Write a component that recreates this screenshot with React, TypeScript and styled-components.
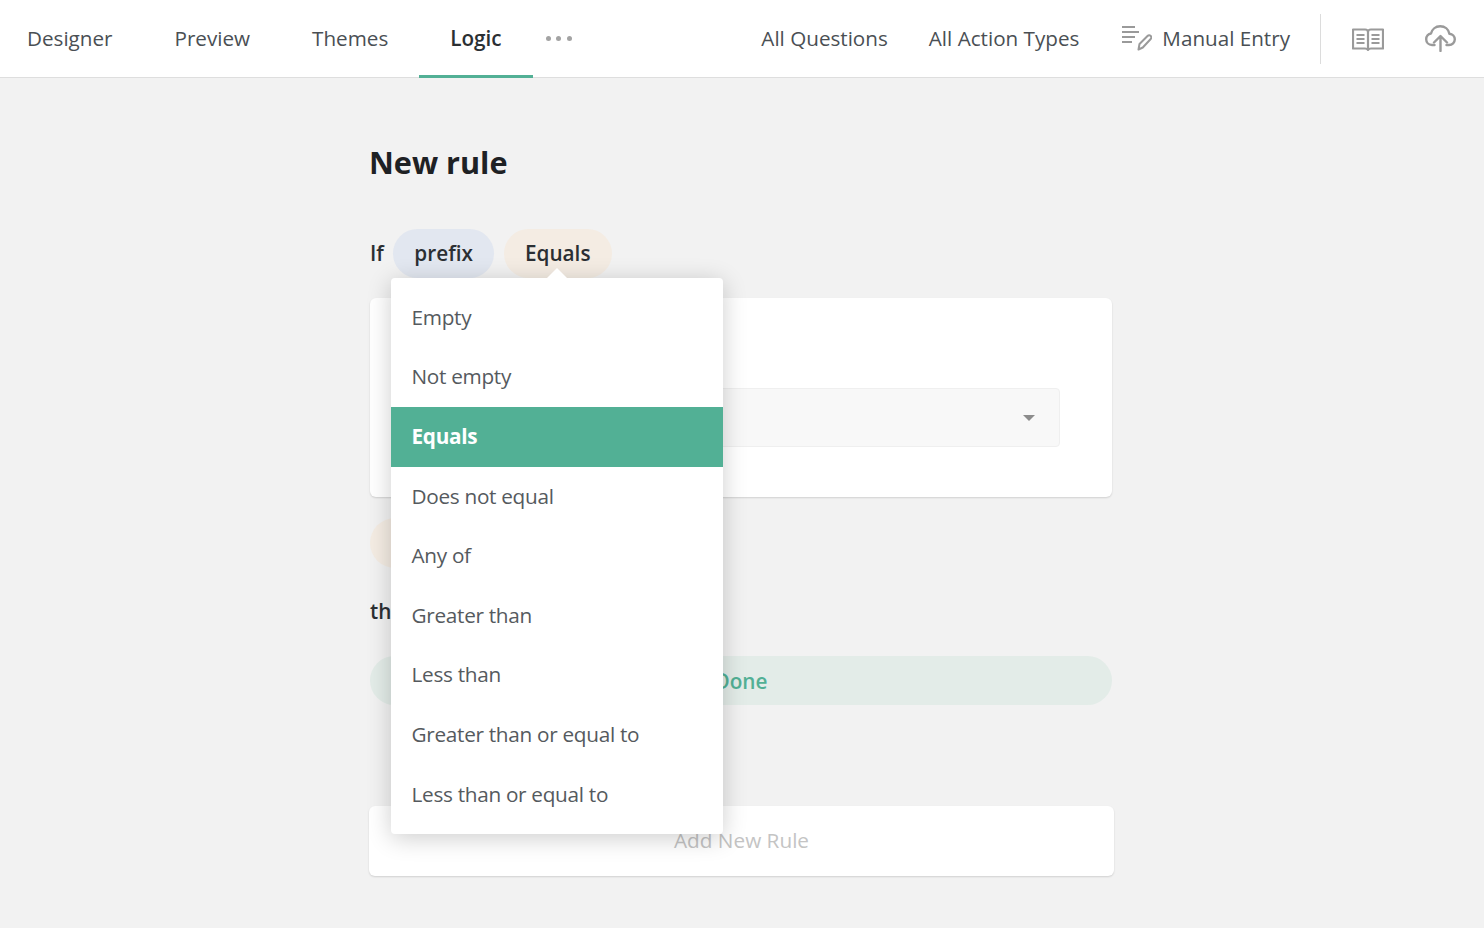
import React from "react";
import styled, { createGlobalStyle } from "styled-components";

const Global = createGlobalStyle`
  html, body { margin: 0; padding: 0; background: #f2f2f2; }
  body { font-family: "Open Sans", "Liberation Sans", sans-serif; }
  * { box-sizing: border-box; }
`;
const Page = styled.div`
  width: 1484px;
  height: 928px;
  overflow: hidden;
  background: #f2f2f2;
`;
const TopBar = styled.header`
  display: flex;
  align-items: stretch;
  justify-content: space-between;
  height: 78px;
  background: #fff;
  border-bottom: 1px solid #dedede;
`;
const Tabs = styled.nav`
  display: flex;
  align-items: stretch;
  margin-left: -4px;
`;
const Tab = styled.div<{ $active?: boolean }>`
  display: flex;
  align-items: center;
  padding: 0 31px;
  height: 78px;
  font-size: 20.65px;
  font-weight: ${(p) => (p.$active ? 600 : 400)};
  color: ${(p) => (p.$active ? "#2b2f33" : "#4a4f54")};
  border-bottom: 3px solid ${(p) => (p.$active ? "#52b095" : "transparent")};
`;
const More = styled.div`
  display: flex;
  align-items: center;
  gap: 5.5px;
  margin-left: 13px;
  padding-bottom: 1px;
`;
const Dot = styled.span`
  width: 5px;
  height: 5px;
  border-radius: 50%;
  background: #a3a3a3;
`;
const Actions = styled.div`
  display: flex;
  align-items: center;
  padding-right: 28px;
`;
const Action = styled.div<{ $gap?: number }>`
  display: flex;
  align-items: center;
  gap: 10px;
  font-size: 20.65px;
  color: #4a4f54;
  margin-left: ${(p) => p.$gap ?? 0}px;
  padding-bottom: 2px;
`;
const Divider = styled.div`
  width: 1px;
  height: 50px;
  background: #dcdcdc;
  margin: 0 31px 0 30px;
`;
const IconSlot = styled.div<{ $gap?: number }>`
  display: flex;
  margin-left: ${(p) => p.$gap ?? 0}px;
`;
const Main = styled.main`
  width: 746px;
  margin-left: 369px;
`;
const Title = styled.h1`
  margin: 62px 0 0 0;
  font-size: 30.6px;
  line-height: 44px;
  font-weight: 700;
  color: #1e2124;
`;
const Conditions = styled.div`
  position: relative;
  display: flex;
  align-items: center;
  gap: 10px;
  margin: 45px 0 0 1px;
  height: 49px;
`;
const Word = styled.span`
  font-size: 20.75px;
  font-weight: 600;
  color: #2b2f33;
`;
const IfWord = styled(Word)`
  margin-right: -0.5px;
  padding-bottom: 2px;
`;
const Pill = styled.div<{ $bg: string }>`
  display: flex;
  align-items: center;
  height: 49px;
  padding: 0 21px 1px;
  border-radius: 25px;
  background: ${(p) => p.$bg};
  font-size: 20.75px;
  font-weight: 600;
  color: #2b2f33;
`;
const Card = styled.section`
  width: 742px;
  height: 199px;
  margin: 20px 0 0 1px;
  padding: 90px 52px 0;
  background: #fff;
  border-radius: 6px;
  box-shadow: 0 1px 2px rgba(0, 0, 0, 0.14);
`;
const SelectBox = styled.div`
  display: flex;
  align-items: center;
  justify-content: flex-end;
  height: 59px;
  padding-right: 24px;
  background: #f8f8f8;
  border: 1px solid #efefef;
  border-radius: 4px;
`;
const Caret = styled.span`
  width: 0;
  height: 0;
  border-left: 6.5px solid transparent;
  border-right: 6.5px solid transparent;
  border-top: 6.5px solid #8c8c8c;
`;
const OperatorPill = styled.div`
  width: 100px;
  height: 50px;
  margin: 21px 0 0 1px;
  border-radius: 25px;
  background: #f4ece3;
`;
const ThenWord = styled(Word)`
  display: block;
  margin: 28px 0 0 1px;
  line-height: 30px;
`;
const DonePill = styled.div`
  display: flex;
  align-items: center;
  justify-content: center;
  width: 742px;
  height: 49px;
  margin: 30px 0 0 1px;
  border-radius: 25px;
  background: #e3ece8;
  font-size: 20.75px;
  font-weight: 600;
  color: #52b095;
`;
const AddRule = styled.div`
  display: flex;
  align-items: center;
  justify-content: center;
  width: 745px;
  height: 70px;
  margin-top: 101px;
  padding-bottom: 2px;
  background: #fff;
  border-radius: 6px;
  box-shadow: 0 1px 2px rgba(0, 0, 0, 0.14);
  font-size: 20.75px;
  color: #c4c4c4;
`;
const Menu = styled.ul`
  position: absolute;
  z-index: 5;
  left: 21px;
  top: 49px;
  width: 332px;
  margin: 0;
  padding: 10px 0;
  list-style: none;
  background: #fff;
  border-radius: 4px;
  box-shadow: 0 4px 24px rgba(0, 0, 0, 0.2);
  &::before {
    content: "";
    position: absolute;
    left: 156px;
    top: -10px;
    border-left: 10px solid transparent;
    border-right: 10px solid transparent;
    border-bottom: 10px solid #fff;
  }
`;
const MenuItem = styled.li<{ $selected?: boolean }>`
  display: flex;
  align-items: center;
  height: 59.6px;
  padding: 0 20.5px 2px;
  font-size: 20.75px;
  letter-spacing: -0.3px;
  font-weight: ${(p) => (p.$selected ? 700 : 400)};
  color: ${(p) => (p.$selected ? "#fff" : "#555a5e")};
  background: ${(p) => (p.$selected ? "#52b095" : "transparent")};
`;

const ops = [
  "Empty",
  "Not empty",
  "Equals",
  "Does not equal",
  "Any of",
  "Greater than",
  "Less than",
  "Greater than or equal to",
  "Less than or equal to",
];

const ManualIcon = () => (
  <svg width="30" height="26" viewBox="0 0 30 26" fill="none" stroke="#9a9a9a" strokeWidth="2">
    <path d="M0 2h13M0 7h17M0 12h13M0 17h10" />
    <path d="M16.500 24.500l1-5.500L25.500 11c1-1 2.400-1 3.200 0 .8.8.8 2 0 3L20.800 22.500z" strokeWidth="2" strokeLinejoin="round" />
  </svg>
);
const BookIcon = () => (
  <svg width="32" height="24" viewBox="0 0 32 24" fill="none" stroke="#9a9a9a" strokeWidth="2.200" strokeLinejoin="round">
    <path d="M1 2.500h12c1.700 0 3 .8 3 2.500 0-1.700 1.300-2.500 3-2.500h12V21.500H19c-1.500 0-2.400.5-3 1.500-.6-1-1.500-1.500-3-1.500H1z" />
    <path d="M16 5v17M4.500 8H12.500M4.500 12H12.500M4.500 16H12.500M19.500 8H27.500M19.500 12H27.500M19.500 16H27.500" />
  </svg>
);
const CloudIcon = () => (
  <svg width="31" height="27" viewBox="0 0 31 27" fill="none" stroke="#9a9a9a" strokeWidth="2.400" strokeLinecap="round" strokeLinejoin="round">
    <path d="M9.500 20H7C3.500 20 1.200 17.300 1.200 14.200c0-3 2.100-5.300 4.800-5.700C7 4.300 10.500 1.300 15.200 1.300c4.800 0 8.400 3.200 9.200 7.400 3.200.3 5.400 2.700 5.400 5.600 0 3.100-2.500 5.700-5.800 5.700h-2.500" />
    <path d="M15.500 26V11.500M9 17.500l6.500-6.500 6.500 6.500" />
  </svg>
);

export default function App() {
  return (
    <Page>
      <Global />
      <TopBar>
        <Tabs>
          <Tab>Designer</Tab>
          <Tab>Preview</Tab>
          <Tab>Themes</Tab>
          <Tab $active>Logic</Tab>
          <More>
            <Dot />
            <Dot />
            <Dot />
          </More>
        </Tabs>
        <Actions>
          <Action>All Questions</Action>
          <Action $gap={41}>All Action Types</Action>
          <Action $gap={43}>
            <ManualIcon />
            Manual Entry
          </Action>
          <Divider />
          <IconSlot>
            <BookIcon />
          </IconSlot>
          <IconSlot $gap={41}>
            <CloudIcon />
          </IconSlot>
        </Actions>
      </TopBar>
      <Main>
        <Title>New rule</Title>
        <Conditions>
          <IfWord>If</IfWord>
          <Pill $bg="#e2e7f0">prefix</Pill>
          <Pill $bg="#f4ece3">Equals</Pill>
          <Menu>
            {ops.map((o) => (
              <MenuItem key={o} $selected={o === "Equals"}>
                {o}
              </MenuItem>
            ))}
          </Menu>
        </Conditions>
        <Card>
          <SelectBox>
            <Caret />
          </SelectBox>
        </Card>
        <OperatorPill />
        <ThenWord>then</ThenWord>
        <DonePill>Done</DonePill>
        <AddRule>Add New Rule</AddRule>
      </Main>
    </Page>
  );
}
